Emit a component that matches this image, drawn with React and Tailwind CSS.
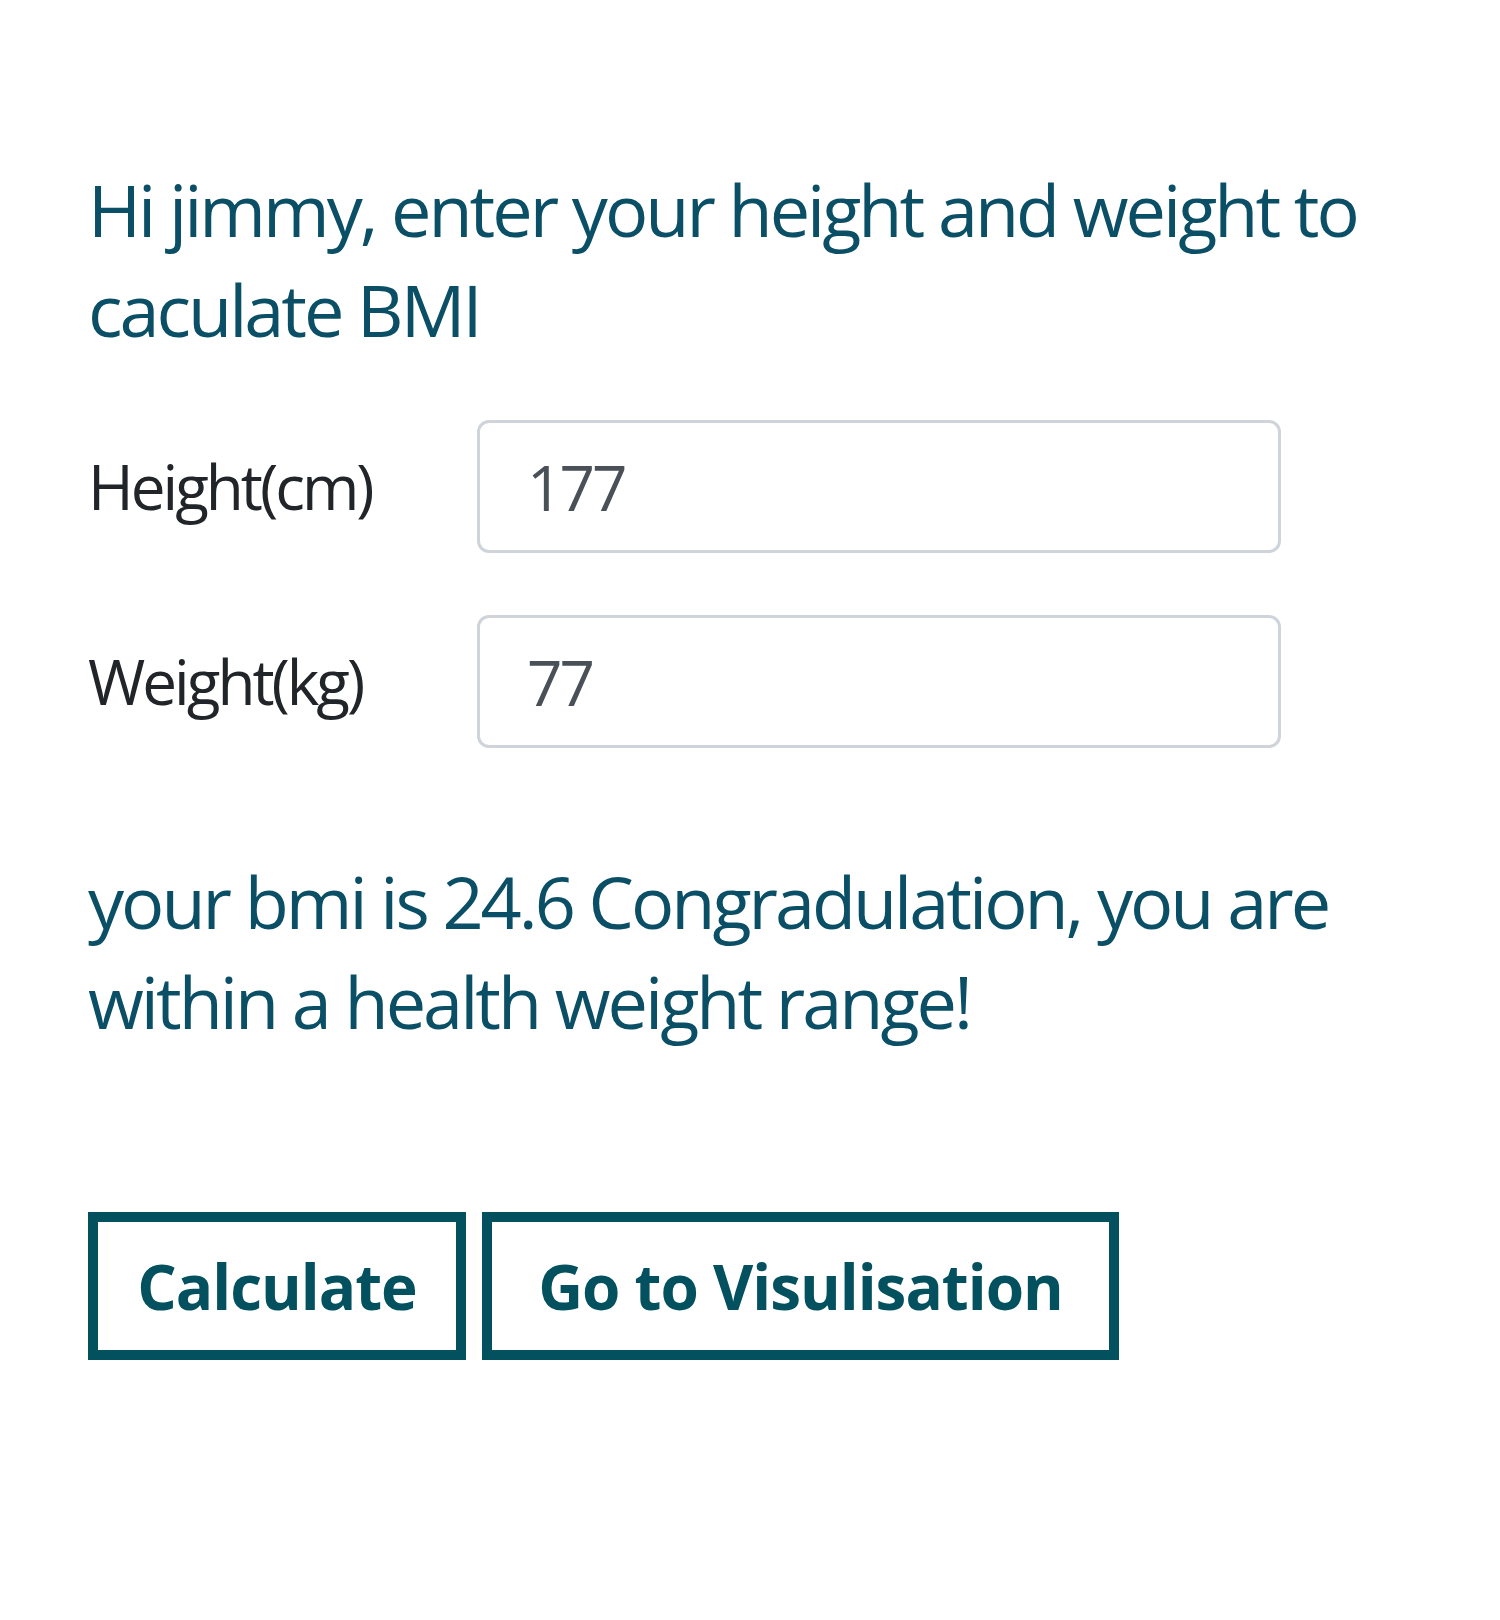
export default function App() {
    return (
        <div className="min-h-[1620px] bg-white px-[88px] pt-[159px]" style={{ fontFamily: '"Open Sans", "Noto Sans", sans-serif' }}>
            <div className="w-[1330px]">
                <h1 className="text-[72px] leading-[100px] font-normal tracking-[-3px] text-[#0b4f66]">
                    Hi jimmy, enter your height and weight to caculate BMI
                </h1>

                <div className="mt-[61px] flex flex-col gap-[62px]">
                    <div className="flex items-center">
                        <label className="w-[389px] text-[62px] tracking-[-3px] text-[#212529]">Height(cm)</label>
                        <input
                            readOnly
                            value="177"
                            className="h-[133px] w-[804px] rounded-[12px] border-[3px] border-[#ced4da] px-[47px] text-[62px] tracking-[-3px] text-[#495057] outline-none"
                            style={{ fontFamily: '"Open Sans", "Noto Sans", sans-serif' }}
                        />
                    </div>
                    <div className="flex items-center">
                        <label className="w-[389px] text-[62px] tracking-[-3px] text-[#212529]">Weight(kg)</label>
                        <input
                            readOnly
                            value="77"
                            className="h-[133px] w-[804px] rounded-[12px] border-[3px] border-[#ced4da] px-[47px] text-[62px] tracking-[-3px] text-[#495057] outline-none"
                            style={{ fontFamily: '"Open Sans", "Noto Sans", sans-serif' }}
                        />
                    </div>
                </div>

                <p className="mt-[103px] text-[72px] leading-[100px] tracking-[-3px] text-[#0b4f66]">
                    your bmi is 24.6 Congradulation, you are within a health weight range!
                </p>

                <div className="mt-[161px] flex gap-[16px]">
                    <button className="h-[148px] w-[378px] border-[10px] border-[#03505f] bg-white text-[62px] font-bold tracking-[-1px] text-[#03505f]">
                        Calculate
                    </button>
                    <button className="h-[148px] w-[637px] border-[10px] border-[#03505f] bg-white text-[62px] font-bold tracking-[-1px] text-[#03505f]">
                        Go to Visulisation
                    </button>
                </div>
            </div>
        </div>
    )
}
